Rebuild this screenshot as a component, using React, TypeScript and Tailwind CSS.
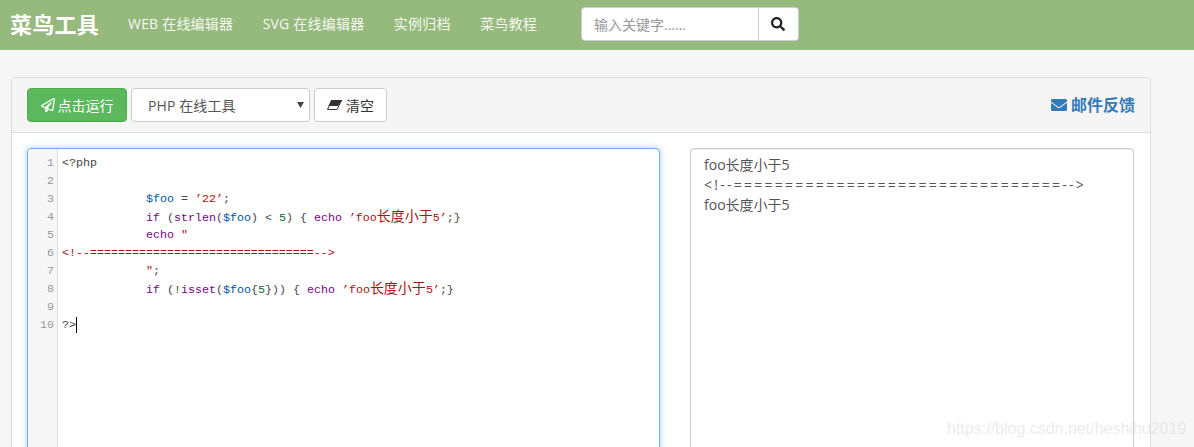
import { FaRegPaperPlane, FaEnvelope, FaSearch } from 'react-icons/fa'

const NAV_LINKS = ['WEB 在线编辑器', 'SVG 在线编辑器', '实例归档', '菜鸟教程']

type Tok = [string, string]

const KW = 'text-[#770088]'
const VAR = 'text-[#0055aa]'
const STR = 'text-[#aa1111]'
const NUM = 'text-[#116644]'
const TXT = 'text-[#444444]'

const CODE: Tok[][] = [
  [['<?php', TXT]],
  [],
  [['            ', TXT], ['$foo', VAR], [' = ', TXT], ['’22’', STR], [';', TXT]],
  [['            ', TXT], ['if', KW], [' (', TXT], ['strlen', KW], ['(', TXT], ['$foo', VAR], [') < ', TXT], ['5', NUM], [') { ', TXT], ['echo', KW], [' ', TXT], ['’foo长度小于5’', STR], [';}', TXT]],
  [['            ', TXT], ['echo', KW], [' ', TXT], ['″', STR]],
  [['<!--================================-->', STR]],
  [['            ', TXT], ['″', STR], [';', TXT]],
  [['            ', TXT], ['if', KW], [' (!', TXT], ['isset', KW], ['(', TXT], ['$foo', VAR], ['{', TXT], ['5', NUM], ['})) { ', TXT], ['echo', KW], [' ', TXT], ['’foo长度小于5’', STR], [';}', TXT]],
  [],
  [['?>', TXT]],
]

// ascii is 7px wide, the chinese part sits at 14px like the original editor font
function Token({ text, color }: { text: string; color: string }) {
  const parts = text.split(/([\u4e00-\u9fff]+)/)
  return (
    <span className={color}>
      {parts.map((p, i) =>
        i % 2 === 1 ? (
          <span key={i} className="text-[14px] leading-[14px] [font-family:'Noto_Sans_CJK_SC',sans-serif]">{p}</span>
        ) : (
          <span key={i}>{p}</span>
        ),
      )}
    </span>
  )
}

export default function App() {
  return (
    <div className="relative h-[447px] overflow-hidden bg-[#f6f6f6] text-[14px] text-[#555555] [font-family:'Open_Sans','Noto_Sans_CJK_SC',sans-serif]">
      {/* Nav */}
      <nav className="flex h-[50px] items-center bg-[#96b97d] pb-[2px] pl-[10px]">
        <a className="w-[89px] whitespace-nowrap text-[22px] font-bold tracking-[0.25px] text-white">菜鸟工具</a>
        <div className="ml-[29px] -mt-[2px] flex gap-[29.5px]">
          {NAV_LINKS.map((l) => (
            <a key={l} className="whitespace-nowrap text-[14px] tracking-[0.2px] text-[#f4f8f0]">{l}</a>
          ))}
        </div>
        <div className="ml-[44px] flex h-[34px] w-[218px]">
          <div className="flex flex-1 items-center rounded-l-[4px] border border-[#cccccc] bg-white pl-[12px] text-[#999999]">
            输入关键字......
          </div>
          <div className="flex w-[40px] items-center justify-center rounded-r-[4px] border border-l-0 border-[#cccccc] bg-white text-[#222222]">
            <FaSearch className="h-[14px] w-[14px]" />
          </div>
        </div>
      </nav>

      {/* Panel */}
      <div className="ml-[11px] mt-[27px] w-[1140px] rounded-[4px] border border-[#dddddd] bg-white">
        <div className="flex h-[55px] items-center gap-[4px] rounded-t-[4px] border-b border-[#dddddd] bg-[#f5f5f5] pl-[15px] pr-[15px]">
          <button className="flex h-[34px] w-[100px] items-center justify-center gap-[3px] rounded-[4px] border border-[#4cae4c] bg-[#5cb85c] text-white">
            <FaRegPaperPlane className="h-[14px] w-[14px]" />
            点击运行
          </button>
          <div className="flex h-[34px] w-[179px] items-center justify-between rounded-[4px] border border-[#cccccc] bg-white pl-[16px] pr-[5px] text-[#555555]">
            <span className="tracking-[0.1px]">PHP 在线工具</span>
            <svg width="7" height="6" viewBox="0 0 7 6">
              <path d="M0 0h7L3.5 6z" fill="#444444" />
            </svg>
          </div>
          <button className="flex h-[34px] w-[73px] items-center justify-center gap-[4px] rounded-[4px] border border-[#cccccc] bg-white text-[#333333]">
            <svg width="15" height="10" viewBox="0 0 15 10">
              <path d="M4.5 0.5H14.5L10 9.5H0.5z" fill="#ffffff" stroke="#333333" />
              <path d="M4.5 0H15L11 6H1.5z" fill="#333333" />
            </svg>
            清空
          </button>
          <a className="ml-auto flex items-center gap-[4px] text-[16px] font-bold text-[#337ab7]">
            <FaEnvelope className="h-[16px] w-[16px]" />
            邮件反馈
          </a>
        </div>

        <div className="flex h-[400px] gap-[30px] pl-[15px] pt-[15px]">
          {/* Editor */}
          <div className="flex h-[400px] w-[633px] rounded-[4px] border border-[#66afe9] bg-white shadow-[0_0_6px_rgba(102,175,233,0.6)]">
            <div className="w-[30px] rounded-tl-[4px] border-r border-[#dddddd] bg-[#f7f7f7] pt-[5px] text-right [font-family:'Liberation_Mono',monospace] text-[11.67px] leading-[18px] text-[#999999]">
              {CODE.map((_, i) => (
                <div key={i} className="h-[18px] pr-[3px]">{i + 1}</div>
              ))}
            </div>
            <div className="flex-1 pl-[4px] pt-[5px] [font-family:'Liberation_Mono',monospace] text-[11.67px] leading-[18px]">
              {CODE.map((line, i) => (
                <div key={i} className="relative h-[18px] whitespace-pre">
                  {line.map(([t, c], j) => (
                    <Token key={j} text={t} color={c} />
                  ))}
                  {i === CODE.length - 1 && <span className="absolute left-[14px] top-[1px] h-[16px] w-px bg-black" />}
                </div>
              ))}
            </div>
          </div>

          {/* Output */}
          <div className="h-[400px] w-[444px] rounded-[4px] border border-[#cccccc] bg-white pl-[13px] pt-[6px] leading-[20px] shadow-[inset_0_1px_1px_rgba(0,0,0,0.075)]">
            <div>foo长度小于5</div>
            <div className="whitespace-nowrap tracking-[2.26px]">{'<!--================================-->'}</div>
            <div>foo长度小于5</div>
          </div>
        </div>
      </div>

      {/* Watermark */}
      <div className="absolute left-[947px] top-[418px] whitespace-nowrap [font-family:'Liberation_Sans',sans-serif] text-[16px] leading-[22px] text-[#d8d8d8]/50">
        https://blog.csdn.net/heshihu2019
      </div>
    </div>
  )
}
